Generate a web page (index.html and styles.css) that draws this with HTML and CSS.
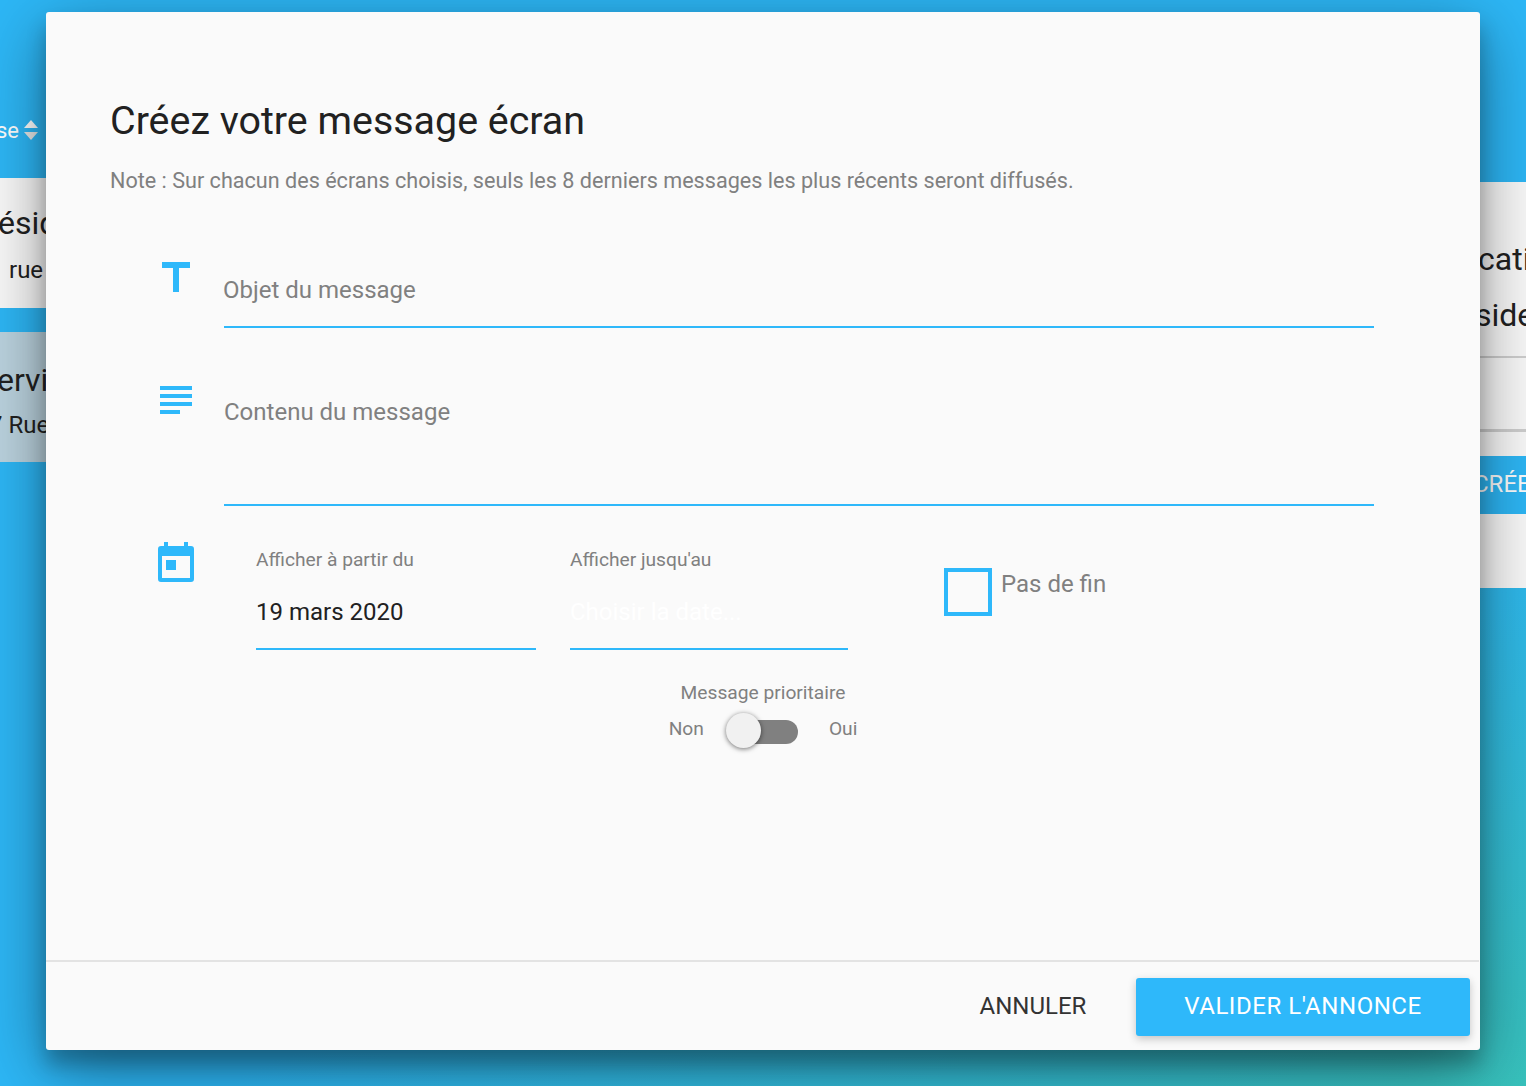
FILE: index.html
```html
<!DOCTYPE html>
<html lang="fr">
<head>
<meta charset="utf-8">
<title>Créez votre message écran</title>
<link rel="stylesheet" href="styles.css">
</head>
<body>
<div class="backdrop">
  <div class="sort-head">
    <span>se</span>
    <svg class="sort-icon" width="14" height="20" viewBox="0 0 14 20"><path class="sort-up" d="M7 0l7 8H0z"/><path class="sort-down" d="M7 20l7-8H0z"/></svg>
  </div>
  <div class="card card-one">
    <div class="card-title">ésid</div>
    <div class="card-sub">rue</div>
  </div>
  <div class="card card-two">
    <div class="card-title">ervi</div>
    <div class="card-sub">7 Rue</div>
  </div>
  <div class="side-card">
    <div class="side-top">
      <div class="side-line">cati</div>
      <div class="side-line side-line-two">side</div>
    </div>
    <div class="side-mid"></div>
    <div class="side-btn">CRÉE</div>
  </div>
</div>

<div class="modal">
  <div class="modal-body">
    <h1 class="title">Créez votre message écran</h1>
    <p class="note">Note : Sur chacun des écrans choisis, seuls les 8 derniers messages les plus récents seront diffusés.</p>

    <div class="row row-object">
      <svg class="icon icon-t" width="28" height="30" viewBox="0 0 28 30"><path d="M0 0h28v6H17v24h-6V6H0z"/></svg>
      <div class="field field-object">Objet du message</div>
    </div>

    <div class="row row-content">
      <svg class="icon icon-lines" width="32" height="28" viewBox="0 0 32 28"><path d="M0 0h32v4H0zM0 8h32v4H0zM0 16h32v4H0zM0 24h20v4H0z"/></svg>
      <div class="field field-content">Contenu du message</div>
    </div>

    <div class="row row-dates">
      <svg class="icon icon-cal" width="36" height="40" viewBox="0 0 36 40"><path fill-rule="evenodd" d="M6 0h4v4h16V0h4v4h3a3 3 0 0 1 3 3v30a3 3 0 0 1-3 3H3a3 3 0 0 1-3-3V7a3 3 0 0 1 3-3h3zM4 14v22h28V14z"/><path d="M8 18h10v10H8z"/></svg>
      <div class="date date-from">
        <div class="date-label">Afficher à partir du</div>
        <div class="date-value">19 mars 2020</div>
      </div>
      <div class="date date-to">
        <div class="date-label">Afficher jusqu'au</div>
        <div class="date-value date-empty">Choisir la date...</div>
      </div>
      <div class="no-end">
        <span class="checkbox"></span>
        <span class="no-end-label">Pas de fin</span>
      </div>
    </div>

    <div class="priority">
      <div class="priority-label">Message prioritaire</div>
      <div class="switch-row">
        <span class="switch-off">Non</span>
        <span class="switch"><span class="thumb"></span></span>
        <span class="switch-on">Oui</span>
      </div>
    </div>
  </div>

  <div class="modal-foot">
    <button class="btn btn-cancel" type="button">ANNULER</button>
    <button class="btn btn-ok" type="button">VALIDER L'ANNONCE</button>
  </div>
</div>
</body>
</html>
```
FILE: styles.css
```css
* { box-sizing: border-box; }
html, body { margin: 0; height: 100%; }
body {
  position: relative;
  width: 1526px;
  height: 1086px;
  overflow: hidden;
  font-family: Roboto, "Liberation Sans", sans-serif;
  background: linear-gradient(155deg, #2db7f6 0%, #2db7f6 66%, #38c2bc 100%);
}
.backdrop { position: absolute; inset: 0; overflow: hidden; }
.sort-head {
  position: absolute; left: -4px; top: 116px; width: 50px; height: 28px;
  display: flex; align-items: center; gap: 5px;
  color: #fff; font-size: 22px;
}
.sort-icon { flex: none; }
.sort-up { fill: #ffffff; }
.sort-down { fill: #e8e8e8; }
.card {
  position: absolute; left: 0; width: 100px; height: 130px;
  background: #fafafa; color: #212121; overflow: hidden;
}
.card-one { top: 178px; padding-top: 26px; }
.card-two { top: 332px; padding-top: 29px; background: #bcd4e0; }
.card-title { font-size: 32px; line-height: 38px; margin-left: -2px; white-space: nowrap; }
.card-sub { font-size: 24px; line-height: 28px; white-space: nowrap; }
.card-one .card-sub { margin-top: 14px; margin-left: 9px; }
.card-two .card-title { margin-left: -3px; }
.card-two .card-sub { margin-top: 12px; margin-left: -11px; }
.side-card {
  position: absolute; left: 1400px; top: 182px; width: 126px; height: 406px;
  background: #fafafa; color: #212121;
}
.side-top { height: 176px; padding: 49px 0 0 78px; border-bottom: 2px solid #cfcfcf; }
.side-line { font-size: 32px; line-height: 56px; white-space: nowrap; }
.side-line-two { margin-left: -3px; }
.side-mid { height: 74px; border-bottom: 3px solid #cfcfcf; }
.side-btn {
  margin-top: 24px; height: 58px; background: #2db7f6; color: #fff;
  font-size: 24px; line-height: 56px; padding-left: 73px; white-space: nowrap; overflow: hidden;
}

.modal {
  position: absolute; left: 46px; top: 12px; width: 1434px; height: 1038px;
  background: #fafafa; border-radius: 3px;
  display: flex; flex-direction: column;
  box-shadow: 0 19px 70px rgba(0,0,0,.42), 0 15px 20px rgba(0,0,0,.24);
}
.modal-body { flex: 1; padding: 85px 106px 0 64px; }
.title { margin: 0; font-size: 39.4px; line-height: 48px; font-weight: 400; color: #212121; }
.note { margin: 22px 0 0; font-size: 21.6px; line-height: 28px; color: #808080; }

.row { display: flex; align-items: flex-start; }
.icon { flex: none; fill: #2eb8fa; }
.field {
  flex: 1; border-bottom: 2px solid #2eb8fa; color: #808080;
  font-size: 24px; line-height: 30px;
}
.row-object { margin-top: 67px; }
.icon-t { margin-left: 52px; margin-right: 34px; }
.field-object { padding-top: 13px; height: 66px; text-indent: -1px; }
.row-content { margin-top: 58px; }
.icon-lines { margin-left: 50px; margin-right: 32px; }
.field-content { padding-top: 11px; height: 120px; }

.row-dates { margin-top: 36px; }
.icon-cal { margin-left: 48px; margin-right: 62px; }
.date { height: 108px; border-bottom: 2px solid #2eb8fa; }
.date-from { width: 280px; margin-right: 34px; }
.date-to { width: 278px; margin-right: 96px; }
.date-label { font-size: 19.2px; line-height: 24px; color: #808080; padding-top: 6px; }
.date-value { font-size: 24px; line-height: 30px; color: #212121; margin-top: 25px; }
.date-empty { color: #ffffff; }
.no-end { display: flex; align-items: flex-start; margin-top: 26px; }
.checkbox { width: 48px; height: 48px; border: 4px solid #2eb8fa; flex: none; }
.no-end-label { font-size: 24px; line-height: 30px; color: #808080; margin-left: 9px; padding-top: 1px; }

.priority { margin: 29px 0 0 42px; display: flex; flex-direction: column; align-items: center; color: #808080; font-size: 19.2px; }
.priority-label { line-height: 28px; }
.switch-row { display: flex; align-items: center; margin-top: 7px; line-height: 28px; }
.switch-off { margin-right: 24px; }
.switch-on { margin-left: 31px; }
.switch { position: relative; display: block; width: 70px; height: 24px; margin-top: 6px; background: #808080; border-radius: 12px; }
.thumb {
  position: absolute; left: -2px; top: -7px; width: 35px; height: 35px; border-radius: 50%;
  background: #f1f1f1; box-shadow: 0 1px 5px rgba(0,0,0,.55);
}

.modal-foot {
  height: 90px; flex: none; border-top: 2px solid #e3e3e3; margin-right: 1px;
  display: flex; align-items: flex-start; justify-content: flex-end; padding: 16px 9px 0 0;
}
.btn { border: 0; font-family: inherit; font-size: 24px; height: 58px; border-radius: 3px; padding: 0 0 2px; }
.btn-cancel { background: none; color: #333; width: 156px; margin-right: 25px; }
.btn-ok {
  width: 334px; background: #2eb8fa; color: #fff; letter-spacing: .55px;
  box-shadow: 0 3px 8px rgba(0,0,0,.22);
}
```
